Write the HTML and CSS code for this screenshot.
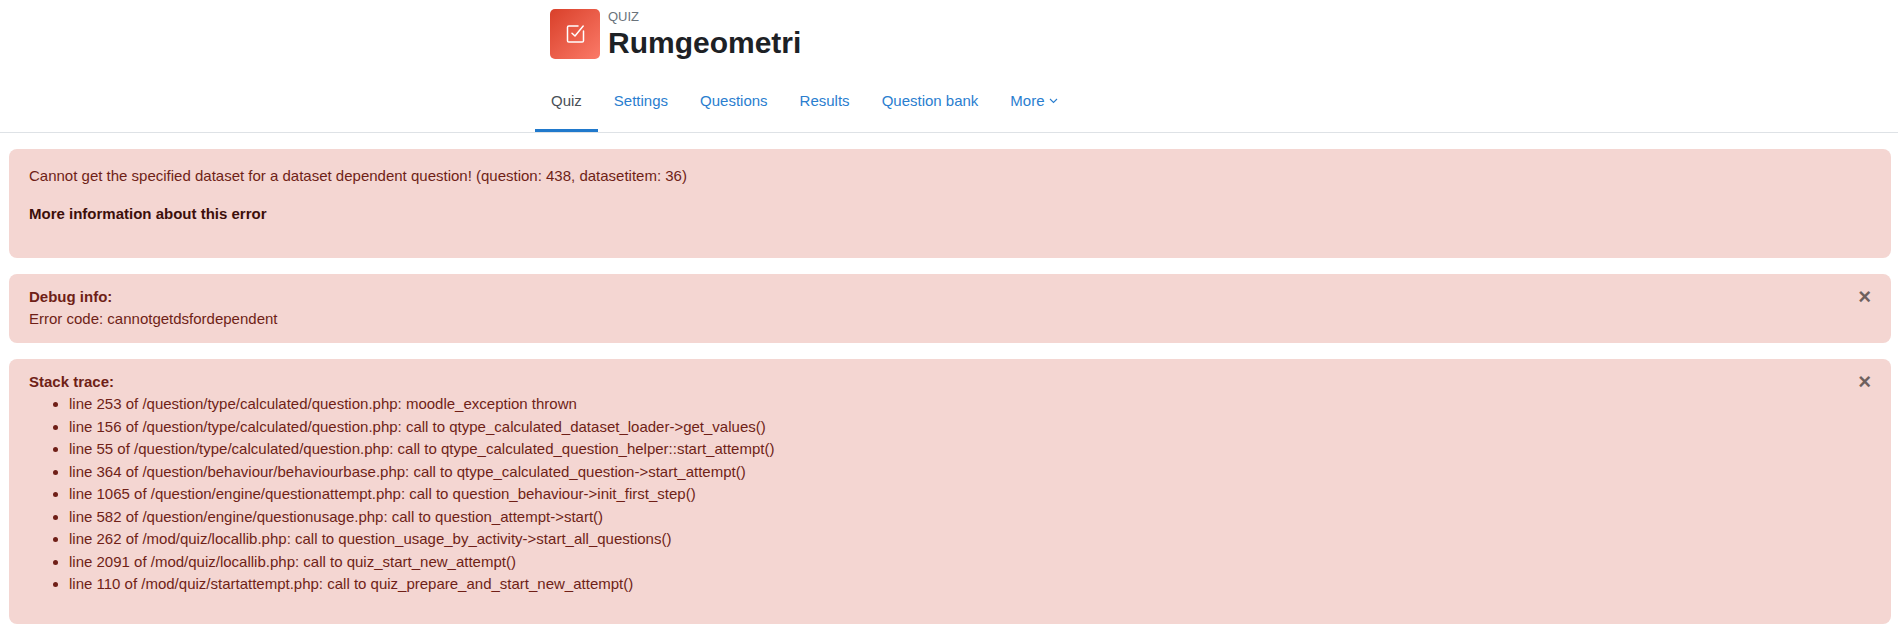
FILE: index.html
```html
<!DOCTYPE html>
<html lang="en">
<head>
  <meta charset="UTF-8" />
  <title>Rumgeometri</title>
  <link rel="stylesheet" href="styles.css">
</head>
<body>

  <!-- Activity header -->
  <header class="page-header">
    <div class="header-inner">
      <div class="activity-head">
        <div class="activity-icon">
          <svg width="24" height="24" viewBox="0 0 24 24" fill="none" stroke="#fff" stroke-width="1.5" stroke-linecap="round" stroke-linejoin="round">
            <path d="M20.5 9v9.7a1.3 1.3 0 0 1-1.3 1.3H5.8a1.3 1.3 0 0 1-1.3-1.3V5.3A1.3 1.3 0 0 1 5.8 4H15"/>
            <path d="M9 11.2l3 2.8 8.2-10"/>
          </svg>
        </div>
        <div class="activity-text">
          <div class="activity-type">QUIZ</div>
          <h1>Rumgeometri</h1>
        </div>
      </div>
      <nav class="tabs">
        <a class="tab active" href="#">Quiz</a>
        <a class="tab" href="#">Settings</a>
        <a class="tab" href="#">Questions</a>
        <a class="tab" href="#">Results</a>
        <a class="tab" href="#">Question bank</a>
        <a class="tab" href="#">More
          <svg class="caret" width="9" height="6" viewBox="0 0 9 6" fill="none" stroke="currentColor" stroke-width="1.1"><path d="M1 1l3.5 3.5L8 1"/></svg>
        </a>
      </nav>
    </div>
  </header>

  <!-- Errors -->
  <main class="messages">
    <div class="alert alert-main">
      <p>Cannot get the specified dataset for a dataset dependent question! (question: 438, datasetitem: 36)</p>
      <p class="more-info">More information about this error</p>
    </div>

    <div class="alert">
      <button class="close">&times;</button>
      <strong>Debug info:</strong><br>
      Error code: cannotgetdsfordependent
    </div>

    <div class="alert">
      <button class="close">&times;</button>
      <strong>Stack trace:</strong>
      <ul>
        <li>line 253 of /question/type/calculated/question.php: moodle_exception thrown</li>
        <li>line 156 of /question/type/calculated/question.php: call to qtype_calculated_dataset_loader-&gt;get_values()</li>
        <li>line 55 of /question/type/calculated/question.php: call to qtype_calculated_question_helper::start_attempt()</li>
        <li>line 364 of /question/behaviour/behaviourbase.php: call to qtype_calculated_question-&gt;start_attempt()</li>
        <li>line 1065 of /question/engine/questionattempt.php: call to question_behaviour-&gt;init_first_step()</li>
        <li>line 582 of /question/engine/questionusage.php: call to question_attempt-&gt;start()</li>
        <li>line 262 of /mod/quiz/locallib.php: call to question_usage_by_activity-&gt;start_all_questions()</li>
        <li>line 2091 of /mod/quiz/locallib.php: call to quiz_start_new_attempt()</li>
        <li>line 110 of /mod/quiz/startattempt.php: call to quiz_prepare_and_start_new_attempt()</li>
      </ul>
    </div>
  </main>

</body>
</html>
```

FILE: styles.css
```css
body {
  margin: 0;
  background-color: #fff;
  font-family: "Liberation Sans", Arial, sans-serif;
  font-size: 15px;
  line-height: 22.5px;
  color: #1d2125;
}

.page-header {
  border-bottom: 1px solid #dee2e6;
}

.header-inner {
  width: 828px;
  margin: 0 auto;
}

.activity-head {
  display: flex;
  gap: 8px;
  padding: 9px 16px 0 15px;
  height: 64px;
}

.activity-icon {
  width: 50px;
  height: 50px;
  border-radius: 5px;
  background: linear-gradient(135deg, #d9402a, #fb7a68);
  display: flex;
  align-items: center;
  justify-content: center;
}

.activity-type {
  font-size: 13px;
  line-height: 16px;
  color: #6a737b;
}

h1 {
  margin: 0;
  font-size: 30px;
  line-height: 36px;
  font-weight: bold;
}

.tabs {
  display: flex;
}

.tab {
  display: flex;
  align-items: center;
  gap: 4px;
  height: 56px;
  padding: 0 16px;
  color: #2a7ecf;
  text-decoration: none;
  border-bottom: 3px solid transparent;
}

.tab.active {
  color: #495057;
  border-bottom-color: #2079cc;
}

.messages {
  padding: 16px 7px 0 9px;
}

.alert {
  position: relative;
  margin-bottom: 16px;
  padding: 12px 20px;
  background-color: #f4d6d2;
  color: #6f1f17;
  border-radius: 8px;
}

.alert-main {
  padding-top: 16px;
  padding-bottom: 16.5px;
}

.alert p {
  margin: 0 0 15px;
}

.alert .more-info {
  margin-bottom: 16px;
  font-weight: bold;
  color: #3c0f0a;
}

.alert ul {
  margin: 0 0 16px;
  padding-left: 40px;
}

.close {
  position: absolute;
  top: 12px;
  right: 20px;
  padding: 0;
  border: none;
  background: none;
  font-family: inherit;
  font-size: 22px;
  line-height: 22px;
  font-weight: bold;
  color: #000;
  opacity: 0.55;
}
```
